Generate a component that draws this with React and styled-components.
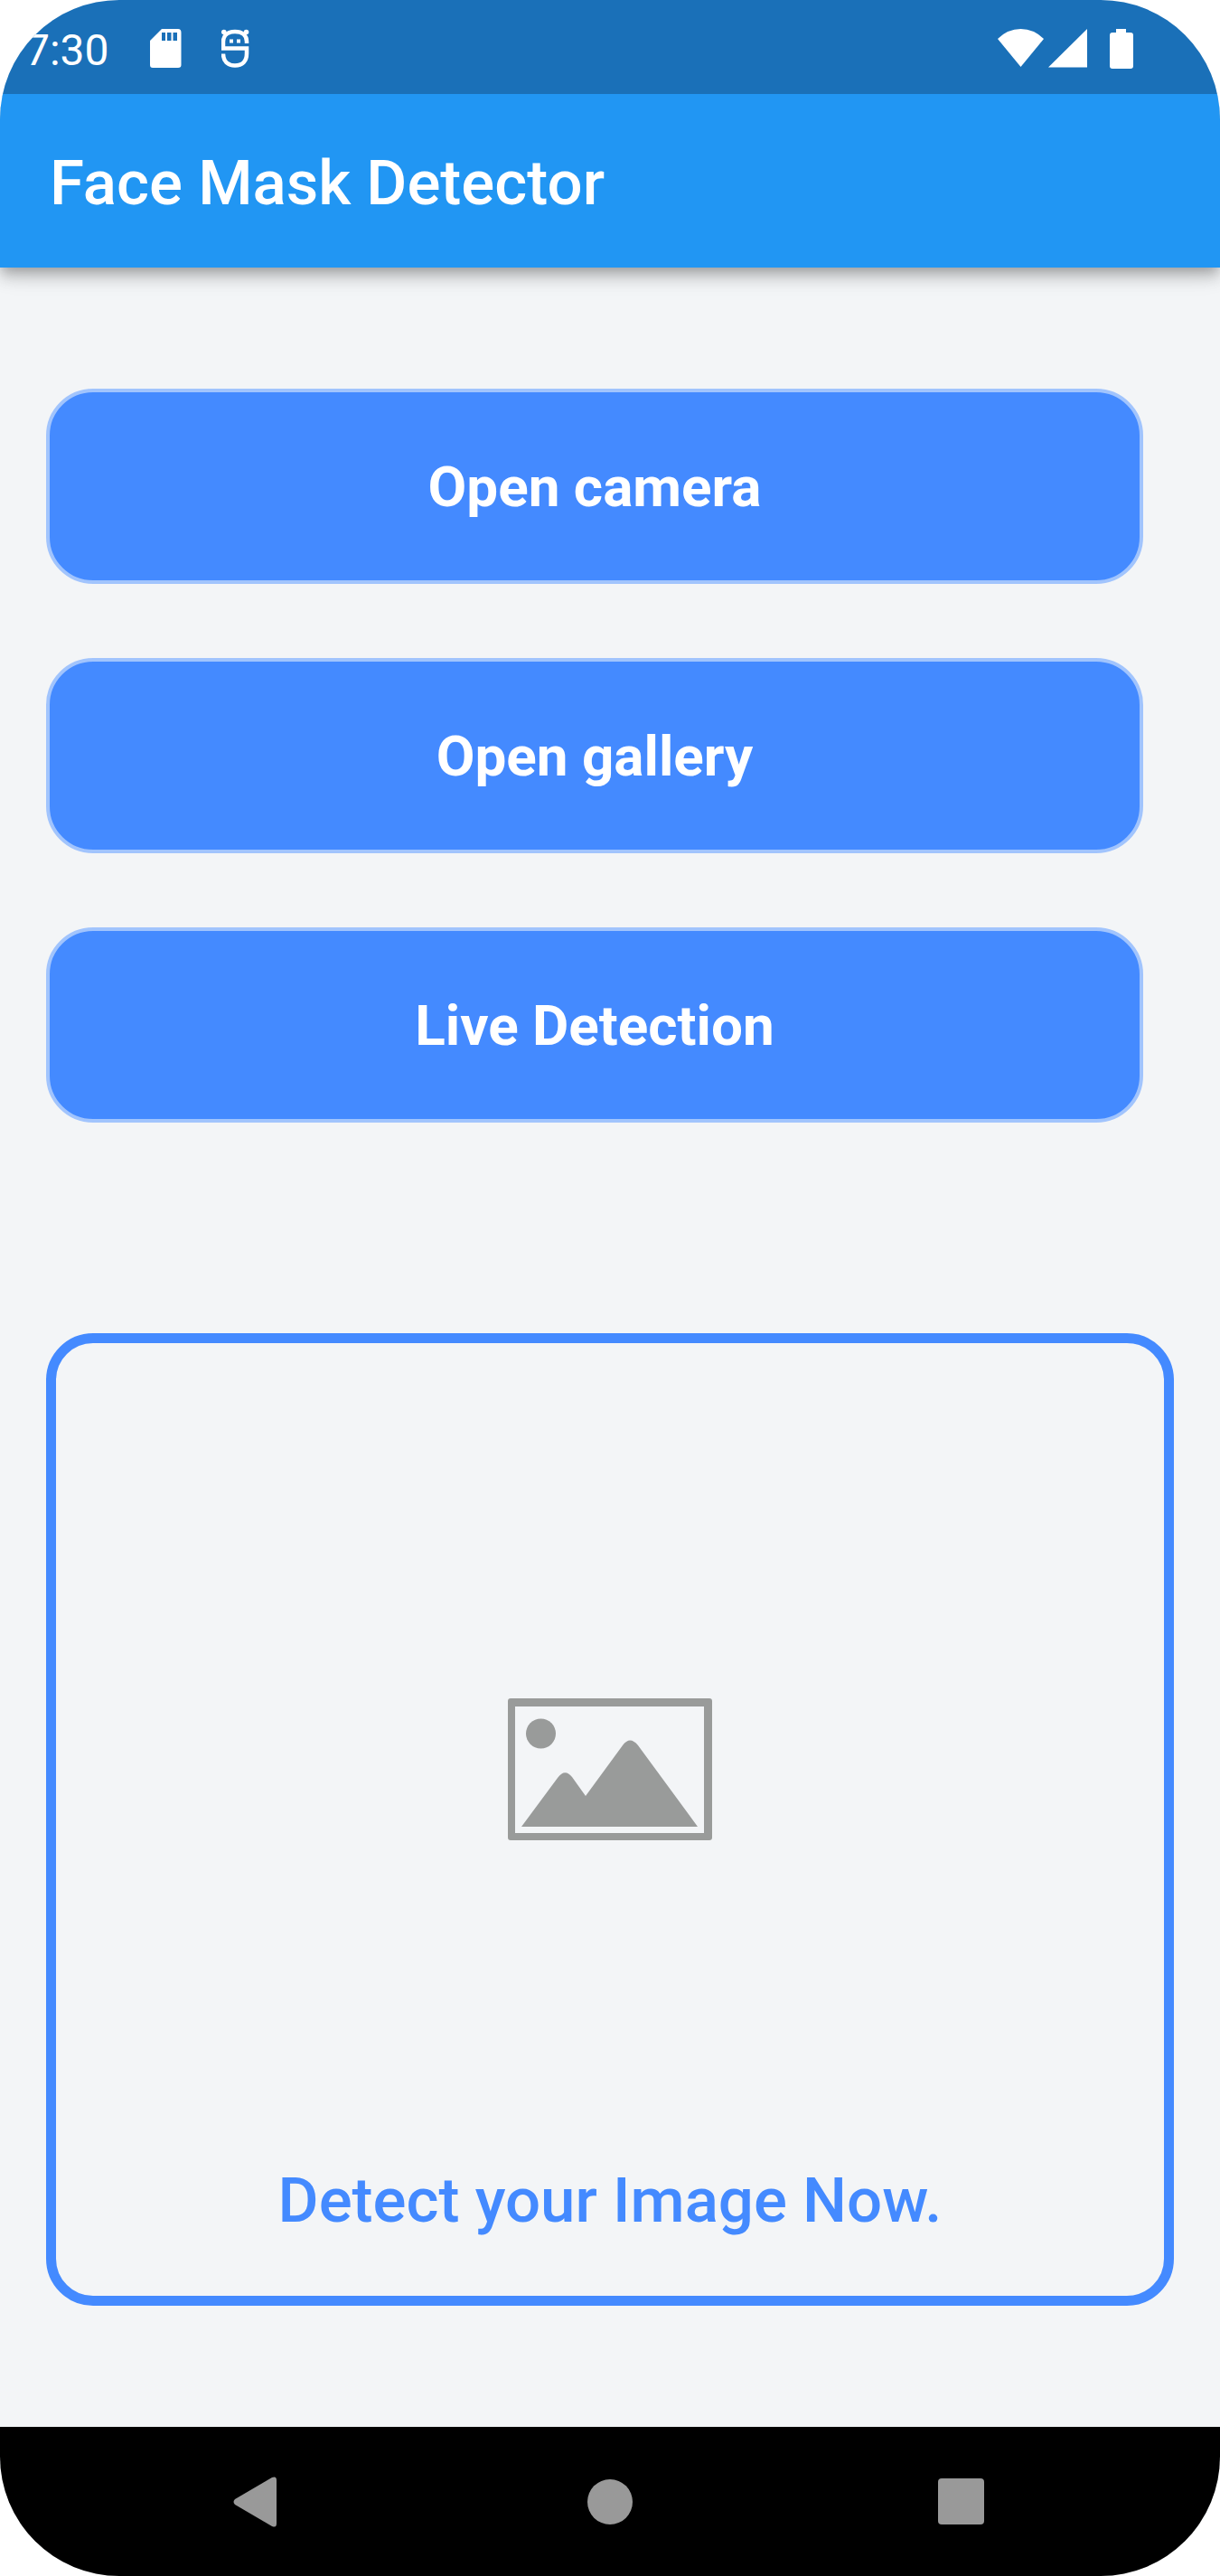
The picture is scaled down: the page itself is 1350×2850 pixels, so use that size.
import React from "react";
import styled, { createGlobalStyle } from "styled-components";

const GlobalStyle = createGlobalStyle`
  *, *::before, *::after { box-sizing: border-box; }
  body { margin: 0; background: #ffffff; font-family: Roboto, "Liberation Sans", sans-serif; }
  h1, p { margin: 0; }
  svg { display: block; }
`;

const Screen = styled.div`
  display: flex;
  flex-direction: column;
  min-height: 100vh;
  overflow: hidden;
  border-radius: 132px;
  background: #f3f5f7;
`;

/* Stacked above the app bar so its shadow only falls downwards. */
const StatusBar = styled.div`
  position: relative;
  z-index: 1;
  display: flex;
  align-items: center;
  justify-content: space-between;
  height: 104px;
  padding: 4px 96px 0 28px;
  background: #1a70b8;
  color: #ffffff;
`;

const StatusGroup = styled.div`
  display: flex;
  align-items: center;
  gap: ${({ $gap }) => $gap}px;
`;

const Clock = styled.span`
  padding-top: 3px;
  font-size: 48px;
  line-height: 56px;
`;

const AppBar = styled.header`
  display: flex;
  align-items: center;
  height: 192px;
  padding: 5px 55px 0;
  background: #2196f3;
  color: #ffffff;
  box-shadow: 0 6px 12px -3px rgba(0, 0, 0, 0.2), 0 12px 15px rgba(0, 0, 0, 0.14),
    0 3px 30px rgba(0, 0, 0, 0.12);
`;

const Title = styled.h1`
  font-size: 69px;
  font-weight: 500;
  line-height: 82px;
`;

const Content = styled.main`
  display: flex;
  flex: 1;
  flex-direction: column;
  gap: 233px;
  padding: 134px 51px;
`;

const Actions = styled.div`
  display: flex;
  flex-direction: column;
  gap: 82px;
  padding-right: 34px;
`;

const ActionButton = styled.button`
  height: 216px;
  padding: 2px 0 0;
  border: 4px solid #a1c4fd;
  border-radius: 52px;
  background: #448aff;
  color: #ffffff;
  font-family: inherit;
  font-size: 62px;
  font-weight: 700;
  line-height: 72px;
`;

const Preview = styled.section`
  display: grid;
  flex: 1;
  grid-template-rows: 1fr auto;
  justify-items: center;
  padding: 0 40px 64px;
  border: 11px solid #448aff;
  border-radius: 52px;
`;

const Placeholder = styled.div`
  display: flex;
  align-items: center;
  padding-top: 36px;
`;

const Caption = styled.p`
  color: #448aff;
  font-size: 69px;
  font-weight: 500;
  line-height: 82px;
  text-align: center;
`;

const NavBar = styled.nav`
  display: flex;
  align-items: center;
  justify-content: center;
  gap: 292px;
  height: 165px;
  background: #000000;
`;

const NavButton = styled.button`
  display: flex;
  align-items: center;
  justify-content: center;
  width: 96px;
  height: 96px;
  padding: 0;
  border: 0;
  background: transparent;
  color: #999999;
`;

const SdCardIcon = () => (
  <svg width="36" height="44" viewBox="0 0 36 44" aria-hidden="true">
    <path
      fill="currentColor"
      fillRule="evenodd"
      d="M14 0H32Q35.500 0 35.500 4V40Q35.500 43 32 43H4Q1 43 1 40V13ZM14 4V13H18V4ZM20 4V13H24.500V4ZM26.500 4V13H31V4Z"
    />
  </svg>
);

const MascotIcon = () => (
  <svg width="32" height="44" viewBox="0 0 32 44" fill="none" aria-hidden="true">
    <path
      stroke="currentColor"
      strokeWidth="4.500"
      d="M28 16V14C28 7 23 3 15 3S2 7 2 14V21.500H28V27C28 36 23 40.500 15 40.500S2 36 2 27.500"
    />
    <circle cx="2.800" cy="3.500" r="2.800" fill="currentColor" />
    <circle cx="27.500" cy="3.500" r="2.800" fill="currentColor" />
    <path fill="currentColor" d="M9 11.500H13V15.500H9ZM17 11.500H21V15.500H17Z" />
  </svg>
);

const WifiIcon = () => (
  <svg width="51" height="44" viewBox="0 0 51 44" fill="currentColor" aria-hidden="true">
    <path d="M0 11Q11 0 25.500 0T51 11L25.500 42Z" />
  </svg>
);

const SignalIcon = () => (
  <svg width="43" height="44" viewBox="0 0 43 44" fill="currentColor" aria-hidden="true">
    <path d="M0 42.500L43 0V42.500Z" />
  </svg>
);

const BatteryIcon = () => (
  <svg width="26" height="44" viewBox="0 0 26 44" fill="currentColor" aria-hidden="true">
    <path d="M7 0H18V4H23Q26 4 26 7V41Q26 44 23 44H3Q0 44 0 41V7Q0 4 3 4H7Z" />
  </svg>
);

const PictureIcon = () => (
  <svg width="226" height="158" viewBox="0 0 226 158" fill="#999b9a" role="img" aria-label="No image selected">
    <path
      fillRule="evenodd"
      d="M3 0H223Q226 0 226 3V154Q226 157 223 157H3Q0 157 0 154V3Q0 0 3 0ZM8 9V149H217V9Z"
    />
    <circle cx="36.500" cy="39" r="16.500" />
    <path d="M15 142L55 88Q63 77 71 87L86 108L127 52Q135 41 144 52L210 142Z" />
  </svg>
);

const BackIcon = () => (
  <svg width="58" height="56" viewBox="0 0 58 56" fill="currentColor" aria-hidden="true">
    <path d="M2 25L43 1Q48 -1 48 4V52Q48 57 43 55L2 31Q-1 28 2 25Z" />
  </svg>
);

const HomeIcon = () => (
  <svg width="50" height="50" viewBox="0 0 50 50" fill="currentColor" aria-hidden="true">
    <circle cx="25" cy="25" r="25" />
  </svg>
);

const RecentsIcon = () => (
  <svg width="51" height="51" viewBox="0 0 51 51" fill="currentColor" aria-hidden="true">
    <rect width="51" height="51" rx="4" />
  </svg>
);

const actions = ["Open camera", "Open gallery", "Live Detection"];

export default function App() {
  return (
    <>
      <GlobalStyle />
      <Screen>
        <StatusBar>
          <StatusGroup $gap={44}>
            <Clock>7:30</Clock>
            <SdCardIcon />
            <MascotIcon />
          </StatusGroup>
          <StatusGroup $gap={25}>
            <StatusGroup $gap={5}>
              <WifiIcon />
              <SignalIcon />
            </StatusGroup>
            <BatteryIcon />
          </StatusGroup>
        </StatusBar>
        <AppBar>
          <Title>Face Mask Detector</Title>
        </AppBar>
        <Content>
          <Actions>
            {actions.map((label) => (
              <ActionButton key={label} type="button">
                {label}
              </ActionButton>
            ))}
          </Actions>
          <Preview>
            <Placeholder>
              <PictureIcon />
            </Placeholder>
            <Caption>Detect your Image Now.</Caption>
          </Preview>
        </Content>
        <NavBar>
          <NavButton type="button" aria-label="Back">
            <BackIcon />
          </NavButton>
          <NavButton type="button" aria-label="Home">
            <HomeIcon />
          </NavButton>
          <NavButton type="button" aria-label="Recent apps">
            <RecentsIcon />
          </NavButton>
        </NavBar>
      </Screen>
    </>
  );
}
